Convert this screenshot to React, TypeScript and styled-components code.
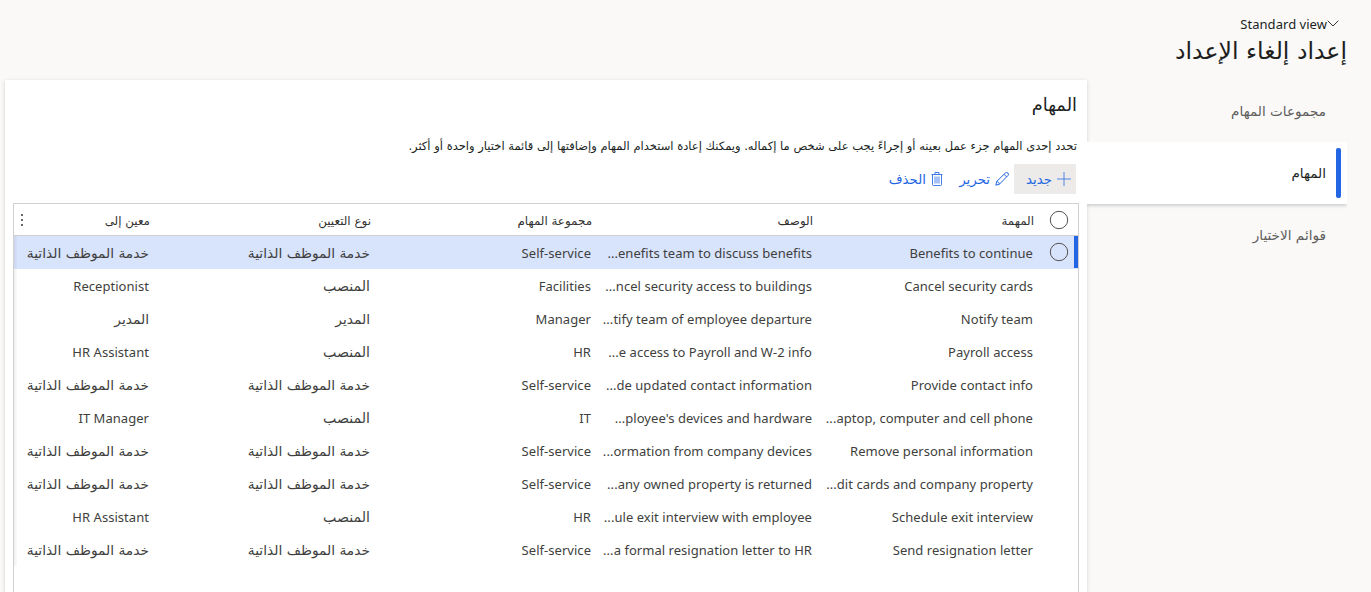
import React from "react";
import styled, { createGlobalStyle } from "styled-components";

const GlobalStyle = createGlobalStyle`
  * { box-sizing: border-box; }
  html, body { margin: 0; padding: 0; }
  body {
    background: #faf9f8;
    color: #201f1e;
    overflow: hidden;
    font-family: "Noto Sans", "DejaVu Sans", sans-serif;
    font-size: 13px;
  }
`;

const Page = styled.div`
  direction: rtl;
  display: flex;
  flex-direction: column;
  width: 1371px;
  height: 592px;
  overflow: hidden;
`;

const Header = styled.header`
  flex: none;
  height: 80px;
  padding: 15px 24px 0 0;
`;

const ViewPicker = styled.div`
  display: flex;
  align-items: center;
  height: 18px;
  padding-right: 8px;
  font-size: 13px;
`;

const Title = styled.h1`
  margin: 0;
  font-size: 23.6px;
  font-weight: 400;
  line-height: 34px;
  white-space: nowrap;
`;

const Main = styled.div`
  flex: 1;
  display: flex;
  padding-right: 24px;
`;

const Tabs = styled.nav`
  flex: none;
  width: 260px;
  display: flex;
  flex-direction: column;
`;

const Tab = styled.div<{ $active?: boolean }>`
  display: flex;
  align-items: center;
  gap: 10px;
  height: 62px;
  padding-right: 6px;
  font-size: 13.6px;
  color: ${(p) => (p.$active ? "#201f1e" : "#605e5c")};
  background: ${(p) => (p.$active ? "#fff" : "transparent")};
  box-shadow: ${(p) => (p.$active ? "0 2px 3px rgba(0,0,0,.16)" : "none")};
  clip-path: inset(0 0 -8px 0);

  &::before {
    content: "";
    width: 5px;
    height: 50px;
    border-radius: 2px;
    background: ${(p) => (p.$active ? "#2266e3" : "transparent")};
  }
`;

const Panel = styled.section`
  flex: none;
  width: 1082px;
  display: flex;
  flex-direction: column;
  padding: 0 8px;
  background: #fff;
  box-shadow: 0 1px 4px rgba(0, 0, 0, 0.16);
`;

const PanelTitle = styled.h2`
  margin: 0;
  height: 50px;
  padding-right: 2px;
  font-size: 17.8px;
  font-weight: 400;
  line-height: 48px;
`;

const Hint = styled.p`
  margin: 0;
  height: 34px;
  padding-right: 2px;
  font-size: 11.53px;
  line-height: 32px;
  white-space: nowrap;
`;

const Toolbar = styled.div`
  display: flex;
  height: 39px;
  padding-right: 3px;
`;

const ToolButton = styled.button<{ $hover?: boolean; $width: number }>`
  display: flex;
  align-items: center;
  gap: 5px;
  width: ${(p) => p.$width}px;
  height: 30px;
  padding: 0 5px;
  border: 0;
  background: ${(p) => (p.$hover ? "#edebe9" : "transparent")};
  color: #2266e3;
  font: inherit;
  font-size: 13.4px;
  white-space: nowrap;
`;

const Grid = styled.div`
  flex: 1;
  display: flex;
  flex-direction: column;
  border: 1px solid #d2d0ce;
  border-bottom: 0;
`;

const Row = styled.div<{ $head?: boolean; $selected?: boolean }>`
  flex: none;
  display: flex;
  height: ${(p) => (p.$head ? 32 : 33)}px;
  line-height: ${(p) => (p.$head ? 33 : 34)}px;
  border-bottom: ${(p) => (p.$head ? "1px solid #d2d0ce" : "0")};
  background: ${(p) => (p.$selected ? "#d8e3fc" : "transparent")};
  color: ${(p) => (p.$head ? "#323130" : "#403f3e")};
`;

const Body = styled.div`
  position: relative;

  &::after {
    content: "";
    position: absolute;
    left: 0;
    top: 0;
    bottom: 0;
    width: 3px;
    background: linear-gradient(to right, rgba(0, 0, 0, 0.06), rgba(0, 0, 0, 0.02));
  }
`;

const Mark = styled.div<{ $selected?: boolean }>`
  flex: none;
  width: 37px;
  height: 32px;
  padding: 6px ${(p) => (p.$selected ? 5 : 9)}px 0 0;
  border-right: ${(p) => (p.$selected ? "4px solid #2266e3" : "0")};
  line-height: 0;
`;

const Cell = styled.div<{ $last?: boolean }>`
  flex: none;
  width: ${(p) => (p.$last ? 143 : 221)}px;
  padding-right: 8px;
  text-align: right;
  white-space: nowrap;
  overflow: hidden;
  font-size: 13px;
`;

const HeadCell = styled(Cell)`
  padding-right: 7px;
  font-size: 11.9px;
  width: ${(p) => (p.$last ? 126 : 221)}px;
`;

const Menu = styled.div`
  display: flex;
  flex: none;
  align-items: center;
  margin-right: auto;
  margin-left: 7px;
`;

const Latin = styled.span`
  direction: ltr;
  unicode-bidi: isolate;
  letter-spacing: 0.04px;
`;

const Arabic = styled.span<{ $size?: number }>`
  font-family: "DejaVu Sans", sans-serif;
  font-size: ${(p) => (p.$size ? p.$size + "px" : "inherit")};
`;

const Chevron = () => (
  <svg width="12" height="12" viewBox="0 0 12 12" fill="none" stroke="#323130">
    <path d="M.7 2.7 6 8l5.3-5.3" />
  </svg>
);

const Plus = () => (
  <svg width="14" height="14" viewBox="0 0 14 14" fill="none" stroke="#2266e3" strokeOpacity=".75">
    <path d="M7 0v14M0 7h14" />
  </svg>
);

const Pencil = () => (
  <svg width="14" height="14" viewBox="0 0 14 14" fill="none" stroke="#2266e3">
    <path d="M.8 13.2 1.7 9.5 10.3 1a1.8 1.8 0 0 1 2.6 2.6L4.4 12.2zM9 2.3l2.6 2.6M1.7 9.5c1.5.1 2.6 1.2 2.7 2.7" />
  </svg>
);

const Trash = () => (
  <svg width="12" height="14" viewBox="0 0 12 14" fill="none" stroke="#2266e3">
    <path d="M.5 2.5h11M4 2.5v-2h4v2M1.5 2.5v10q0 1 1 1h7q1 0 1-1v-10" strokeOpacity=".85" />
    <path d="M4 4.5v7M6 4.5v7M8 4.5v7" strokeWidth=".8" />
  </svg>
);

const Circle = () => (
  <svg width="20" height="20" viewBox="0 0 20 20" fill="none" stroke="#555351">
    <circle cx="10" cy="10" r="8.7" />
  </svg>
);

const Dots = () => (
  <svg width="2" height="12" viewBox="0 0 2 12" fill="#6a6866">
    <path d="M0 0h2v2H0zM0 5h2v2H0zM0 10h2v2H0z" />
  </svg>
);

const columns = ["المهمة", "الوصف", "مجموعة المهام", "نوع التعيين", "معين إلى"];
const self = "خدمة الموظف الذاتية";
const position = "المنصب";
const manager = "المدير";

const rows = [
  ["Benefits to continue", "...enefits team to discuss benefits", "Self-service", self, self],
  ["Cancel security cards", "...ncel security access to buildings", "Facilities", position, "Receptionist"],
  ["Notify team", "...tify team of employee departure", "Manager", manager, manager],
  ["Payroll access", "...e access to Payroll and W-2 info", "HR", position, "HR Assistant"],
  ["Provide contact info", "...de updated contact information", "Self-service", self, self],
  ["...aptop, computer and cell phone", "...ployee's devices and hardware", "IT", position, "IT Manager"],
  ["Remove personal information", "...ormation from company devices", "Self-service", self, self],
  ["...dit cards and company property", "...any owned property is returned", "Self-service", self, self],
  ["Schedule exit interview", "...ule exit interview with employee", "HR", position, "HR Assistant"],
  ["Send resignation letter", "...a formal resignation letter to HR", "Self-service", self, self],
];

const isLatin = (s: string) => /[A-Za-z]/.test(s);

export default function App() {
  return (
    <Page>
      <GlobalStyle />
      <Header>
        <ViewPicker>
          <Chevron />
          <Latin>Standard view</Latin>
        </ViewPicker>
        <Title>
          <Arabic>إعداد إلغاء الإعداد</Arabic>
        </Title>
      </Header>
      <Main>
        <Tabs>
          <Tab><Arabic>مجموعات المهام</Arabic></Tab>
          <Tab $active><Arabic>المهام</Arabic></Tab>
          <Tab><Arabic>قوائم الاختيار</Arabic></Tab>
        </Tabs>
        <Panel>
          <PanelTitle><Arabic>المهام</Arabic></PanelTitle>
          <Hint>
            <Arabic>
              تحدد إحدى المهام جزء عمل بعينه أو إجراءً يجب على شخص ما إكماله. ويمكنك إعادة استخدام المهام وإضافتها إلى قائمة اختيار واحدة أو أكثر.
            </Arabic>
          </Hint>
          <Toolbar>
            <ToolButton $hover $width={62}><Plus /><Arabic>جديد</Arabic></ToolButton>
            <ToolButton $width={66}><Pencil /><Arabic>تحرير</Arabic></ToolButton>
            <ToolButton $width={66}><Trash /><Arabic>الحذف</Arabic></ToolButton>
          </Toolbar>
          <Grid>
            <Row $head>
              <Mark><Circle /></Mark>
              {columns.map((c, i) => (
                <HeadCell key={c} $last={i === columns.length - 1}><Arabic>{c}</Arabic></HeadCell>
              ))}
              <Menu><Dots /></Menu>
            </Row>
            <Body>
              {rows.map((r, i) => (
                <Row key={i} $selected={i === 0}>
                  <Mark $selected={i === 0}>{i === 0 && <Circle />}</Mark>
                  {r.map((t, j) => (
                    <Cell key={j} $last={j === r.length - 1}>
                      {isLatin(t) ? <Latin>{t}</Latin> : <Arabic $size={t === position ? 14.2 : 13.8}>{t}</Arabic>}
                    </Cell>
                  ))}
                </Row>
              ))}
            </Body>
          </Grid>
        </Panel>
      </Main>
    </Page>
  );
}
